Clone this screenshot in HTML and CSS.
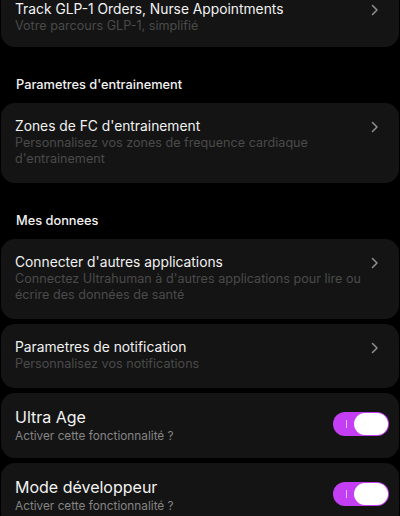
FILE: index.html
```html
<!DOCTYPE html>
<html lang="fr">
<head>
    <meta charset="UTF-8">
    <meta name="viewport" content="width=device-width, initial-scale=1.0">
    <title>Parametres</title>
    <link rel="stylesheet" href="styles.css">
</head>
<body>
    <div class="settings">
        <div class="card card-first">
            <div class="card-text">
                <div class="card-title">Track GLP-1 Orders, Nurse Appointments</div>
                <div class="card-sub">Votre parcours GLP-1, simplifié</div>
            </div>
            <svg class="chevron" viewBox="0 0 8 12" width="8" height="12"><path d="M1.5 1.5 L6 6 L1.5 10.5" /></svg>
        </div>

        <div class="section-title">Parametres d'entrainement</div>
        <div class="card">
            <div class="card-text">
                <div class="card-title">Zones de FC d'entrainement</div>
                <div class="card-sub">Personnalisez vos zones de frequence cardiaque d'entrainement</div>
            </div>
            <svg class="chevron" viewBox="0 0 8 12" width="8" height="12"><path d="M1.5 1.5 L6 6 L1.5 10.5" /></svg>
        </div>

        <div class="section-title">Mes donnees</div>
        <div class="card">
            <div class="card-text">
                <div class="card-title">Connecter d'autres applications</div>
                <div class="card-sub">Connectez Ultrahuman à d'autres applications pour lire ou écrire des données de santé</div>
            </div>
            <svg class="chevron" viewBox="0 0 8 12" width="8" height="12"><path d="M1.5 1.5 L6 6 L1.5 10.5" /></svg>
        </div>
        <div class="card">
            <div class="card-text">
                <div class="card-title">Parametres de notification</div>
                <div class="card-sub">Personnalisez vos notifications</div>
            </div>
            <svg class="chevron" viewBox="0 0 8 12" width="8" height="12"><path d="M1.5 1.5 L6 6 L1.5 10.5" /></svg>
        </div>

        <div class="card card-toggle">
            <div class="card-text">
                <div class="card-title big">Ultra Age</div>
                <div class="card-sub light">Activer cette fonctionnalité ?</div>
            </div>
            <div class="toggle"><span class="toggle-mark"></span><span class="toggle-knob"></span></div>
        </div>
        <div class="card card-toggle">
            <div class="card-text">
                <div class="card-title big">Mode développeur</div>
                <div class="card-sub light">Activer cette fonctionnalité ?</div>
            </div>
            <div class="toggle"><span class="toggle-mark"></span><span class="toggle-knob"></span></div>
        </div>
    </div>
</body>
</html>
```

FILE: styles.css
```css
body {
    margin: 0;
    background-color: #000;
    font-family: Inter, "Noto Sans", sans-serif;
    color: #f2f2f2;
    overflow: hidden;
}

.settings {
    display: flex;
    flex-direction: column;
    gap: 5px;
    padding: 0 1px;
    margin-top: -14px;
}

.card {
    display: flex;
    align-items: center;
    background-color: #141414;
    border-radius: 14px;
    padding: 15px 22px 16px 14px;
}

.card-first {
    padding-bottom: 13px;
}

.card-text {
    flex: 1;
}

.card-title {
    font-size: 13.8px;
    line-height: 17px;
    font-weight: 400;
}

.card-title.big {
    font-size: 16px;
    line-height: 22px;
}

.card-sub {
    font-size: 12.6px;
    line-height: 16px;
    color: #4a4a4a;
}

.card-sub.light {
    font-size: 11.8px;
    color: #858585;
}

.chevron {
    fill: none;
    stroke: #8c8c8c;
    stroke-width: 1.6;
    stroke-linecap: round;
    stroke-linejoin: round;
    align-self: flex-start;
    margin-top: 3px;
    margin-right: -2px;
    margin-left: 6px;
}

.section-title {
    font-size: 12.8px;
    font-weight: 500;
    line-height: 16px;
    padding: 25px 15px 5px;
}

.card-toggle {
    padding: 13px 10px 14px 14px;
}

.toggle {
    position: relative;
    width: 56px;
    height: 24px;
    border-radius: 12px;
    background-color: #c43ff3;
    margin-bottom: 3px;
}

.toggle-mark {
    position: absolute;
    left: 13px;
    top: 8px;
    width: 1px;
    height: 8px;
    background-color: #f0c8fc;
}

.toggle-knob {
    position: absolute;
    right: 1px;
    top: 1px;
    width: 34px;
    height: 22px;
    border-radius: 11px;
    background-color: #fff;
}
```
